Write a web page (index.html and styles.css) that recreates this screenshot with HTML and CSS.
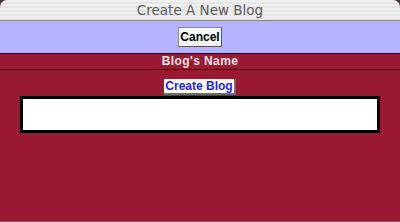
FILE: index.html
```html
<!DOCTYPE html>
<html lang="en">
<head>
    <meta charset="UTF-8">
    <title>Create A New Blog</title>
    <link rel="stylesheet" href="styles.css">
</head>
<body>
    <div class="window">
        <div class="titlebar">Create A New Blog</div>

        <div class="toolbar">
            <button type="button" class="btn-cancel">Cancel</button>
        </div>

        <div class="section-head">Blog's Name</div>

        <form class="blog-form" id="new-blog-form">
            <button type="submit" class="btn-create">Create Blog</button>
            <input type="text" class="blog-name" name="blogname">
        </form>
    </div>
</body>
</html>
```

FILE: styles.css
```css
html {
    background-color: #3a3a3a;
}
body {
    margin: 0;
    padding: 0;
    font-family: 'Liberation Sans', Arial, sans-serif;
}
.window {
    width: 400px;
    height: 221px;
    background-color: #9b1a33;
    border-radius: 7px 7px 0 0;
    overflow: hidden;
    border-bottom: 1px solid #666;
}
.titlebar {
    height: 20px;
    line-height: 21px;
    text-align: center;
    font-family: 'DejaVu Sans', sans-serif;
    font-size: 13.5px;
    color: #5a5a5a;
    background: repeating-linear-gradient(#f0f0f0 0, #f0f0f0 2px, #e6e6e6 2px, #e6e6e6 4px);
    border-bottom: 1px solid #8a8a8a;
}
.toolbar {
    height: 32px;
    background-color: #b3b3ff;
    border-bottom: 1px solid #1a0008;
    display: flex;
    justify-content: center;
    align-items: flex-start;
}
.btn-cancel {
    margin-top: 6px;
    height: 20px;
    padding: 0 1px;
    background-color: #f7f7f7;
    border: 1px solid #8c8c8c;
    border-right-color: #555;
    border-bottom-color: #555;
    font-family: 'Liberation Sans', Arial, sans-serif;
    font-size: 12px;
    font-weight: bold;
    color: #000;
}
.section-head {
    height: 15px;
    line-height: 15px;
    text-align: center;
    font-size: 12px;
    font-weight: bold;
    color: #ece4e6;
    letter-spacing: 0.4px;
    border-bottom: 1px solid #1a0008;
}
.blog-form {
    display: flex;
    flex-direction: column;
    align-items: center;
    padding-top: 9px;
}
.btn-create {
    height: 16px;
    padding: 0 1px;
    background-color: #fffff4;
    border: none;
    border-right: 2px solid #6b6b6b;
    border-bottom: 2px solid #6b6b6b;
    font-family: 'Liberation Sans', Arial, sans-serif;
    font-size: 12px;
    font-weight: bold;
    color: #1f1fff;
    line-height: 14px;
}
.blog-name {
    margin: 1px 0 0 0;
    width: 360px;
    height: 37px;
    box-sizing: border-box;
    border: 3px solid #000;
    background-color: #fff;
}
```
